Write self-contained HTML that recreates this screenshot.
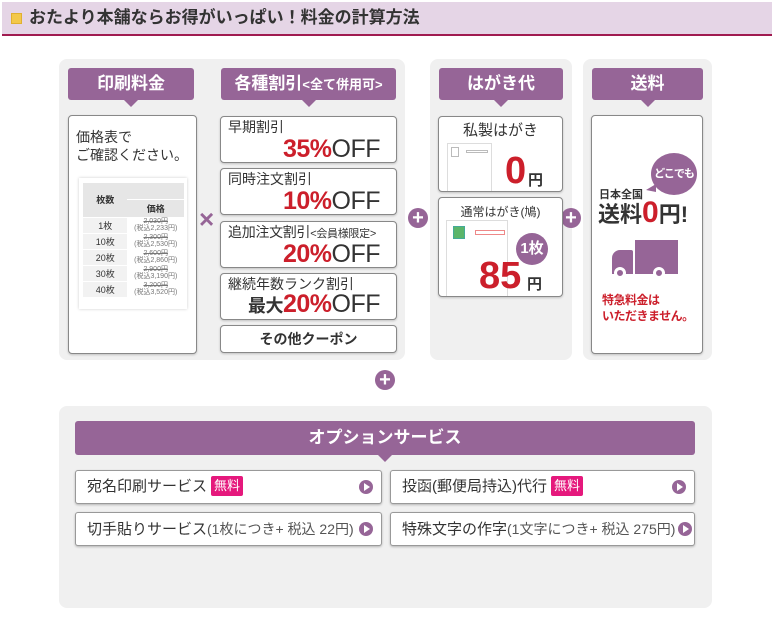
<!DOCTYPE html>
<html><head><meta charset="utf-8"><style>
*{box-sizing:border-box;margin:0;padding:0}
body{width:775px;height:623px;background:#fff;position:relative;overflow:hidden;font-family:"Liberation Sans","Noto Sans CJK JP",sans-serif;color:#333}
.a{position:absolute}
.panel{position:absolute;background:#f0f0f0;border-radius:8px}
.hd{position:absolute;background:#966597;color:#fff;font-weight:bold;border-radius:3px;text-align:center;font-size:17px;line-height:32px;height:32px;white-space:nowrap}
.hd:after{content:"";position:absolute;left:50%;bottom:-7px;margin-left:-7px;border-left:7px solid transparent;border-right:7px solid transparent;border-top:7px solid #966597}
.box{position:absolute;background:#fff;border:1px solid #888;border-radius:4px;box-shadow:0 1px 2px rgba(0,0,0,.2)}
.red{color:#cc1f2b;font-weight:bold}
.off{position:absolute;right:16px;bottom:-1px;font-size:25px;line-height:28px;font-weight:bold;color:#cc1f2b;letter-spacing:-.5px;white-space:nowrap}
.off span{color:#333;font-weight:normal}
.lbl{position:absolute;left:7px;top:1px;font-size:14px;line-height:18px;white-space:nowrap}
.plus{position:absolute;width:20px;height:20px;border-radius:50%;background:#966597;color:#fff;font-weight:bold;font-size:20px;line-height:20px;text-align:center}
.btn{position:absolute;background:#fff;border:1px solid #999;border-radius:3px;box-shadow:0 1px 2px rgba(0,0,0,.25);height:34px;font-size:15px;line-height:32px;padding-left:11px;white-space:nowrap}
.btn small{font-size:14px;color:#555}
.arr{position:absolute;right:8px;top:9px;width:14px;height:14px;border-radius:50%;background:#966597}
.arr:after{content:"";position:absolute;left:5px;top:3px;border-left:6px solid #fff;border-top:4px solid transparent;border-bottom:4px solid transparent}
.free{display:inline-block;background:#e5187c;color:#fff;font-size:13px;line-height:20px;padding:0 3px;border-radius:2px;margin-left:4px;vertical-align:1px}
table{border-collapse:collapse;font-size:9px;text-align:center}
td{border-bottom:1px solid #fff;height:16px}
</style></head><body>
<div class="a" style="left:2px;top:2px;width:770px;height:32px;background:#e5d5e6"></div>
<div class="a" style="left:2px;top:34px;width:770px;height:2px;background:#a01b50"></div>
<div class="a" style="left:11px;top:13px;width:11px;height:11px;background:#f3c84a;border:1px solid #e0b030"></div>
<div class="a" style="left:29px;top:6px;font-size:17px;font-weight:bold;color:#333;line-height:24px">おたより本舗ならお得がいっぱい！料金の計算方法</div>

<div class="panel" style="left:59px;top:59px;width:346px;height:301px"></div>
<div class="panel" style="left:430px;top:59px;width:142px;height:301px"></div>
<div class="panel" style="left:583px;top:59px;width:129px;height:301px"></div>

<div class="hd" style="left:68px;top:68px;width:126px">印刷料金</div>
<div class="hd" style="left:221px;top:68px;width:175px">各種割引<span style="font-size:13px">&lt;全て併用可&gt;</span></div>
<div class="hd" style="left:439px;top:68px;width:124px">はがき代</div>
<div class="hd" style="left:592px;top:68px;width:111px">送料</div>

<div class="box" style="left:68px;top:115px;width:129px;height:239px">
<div class="a" style="left:7px;top:12px;font-size:14px;line-height:18px">価格表で<br>ご確認ください。</div>
<div class="a" style="left:10px;top:62px;width:108px;height:131px;background:#fff;box-shadow:0 0 3px rgba(0,0,0,.2);padding:5px 3px 0 4px">
<table style="width:100%"><tr><td rowspan="2" style="background:#e6e6e6;width:44%;height:34px;font-weight:bold">枚数</td><td style="background:#e6e6e6;height:15px"></td></tr><tr><td style="background:#e6e6e6;font-weight:bold">価格</td></tr>
<tr><td style="background:#f2f2f2">1枚</td><td style="font-size:7px;line-height:7px;color:#777"><s>2,030円</s><br>(税込2,233円)</td></tr>
<tr><td style="background:#f2f2f2">10枚</td><td style="font-size:7px;line-height:7px;color:#777"><s>2,300円</s><br>(税込2,530円)</td></tr>
<tr><td style="background:#f2f2f2">20枚</td><td style="font-size:7px;line-height:7px;color:#777"><s>2,600円</s><br>(税込2,860円)</td></tr>
<tr><td style="background:#f2f2f2">30枚</td><td style="font-size:7px;line-height:7px;color:#777"><s>2,900円</s><br>(税込3,190円)</td></tr>
<tr><td style="background:#f2f2f2">40枚</td><td style="font-size:7px;line-height:7px;color:#777"><s>3,200円</s><br>(税込3,520円)</td></tr></table>
</div></div>

<div class="a" style="left:199px;top:204px;font-size:26px;font-weight:bold;color:#966597">×</div>

<div class="box" style="left:220px;top:116px;width:177px;height:47px"><div class="lbl">早期割引</div><div class="off">35%<span>OFF</span></div></div>
<div class="box" style="left:220px;top:168px;width:177px;height:47px"><div class="lbl">同時注文割引</div><div class="off">10%<span>OFF</span></div></div>
<div class="box" style="left:220px;top:221px;width:177px;height:47px"><div class="lbl" style="letter-spacing:-.3px">追加注文割引<span style="font-size:11px">&lt;会員様限定&gt;</span></div><div class="off">20%<span>OFF</span></div></div>
<div class="box" style="left:220px;top:273px;width:177px;height:47px"><div class="lbl">継続年数ランク割引</div><div class="off"><span style="font-size:18px;font-weight:bold">最大</span>20%<span>OFF</span></div></div>
<div class="box" style="left:220px;top:325px;width:177px;height:28px;text-align:center;font-size:14px;font-weight:bold;line-height:26px">その他クーポン</div>

<div class="plus" style="left:408px;top:208px">+</div>
<div class="plus" style="left:561px;top:208px">+</div>
<div class="plus" style="left:375px;top:370px">+</div>

<div class="box" style="left:438px;top:116px;width:125px;height:76px;overflow:hidden">
<div class="a" style="left:0;top:2px;width:100%;text-align:center;font-size:15px">私製はがき</div>
<div class="a" style="left:8px;top:26px;width:45px;height:60px;border:1px solid #ddd"><div class="a" style="left:3px;top:3px;width:8px;height:10px;border:1px solid #bbb"></div><div class="a" style="left:18px;top:6px;width:22px;height:3px;border:1px solid #bbb"></div></div>
<div class="a red" style="left:66px;top:33px;font-size:38px;line-height:42px">0</div>
<div class="a" style="left:89px;top:52px;font-size:15px;font-weight:bold">円</div>
</div>
<div class="box" style="left:438px;top:197px;width:125px;height:100px;overflow:hidden">
<div class="a" style="left:0;top:5px;width:100%;text-align:center;font-size:12px">通常はがき(鳩)</div>
<div class="a" style="left:7px;top:22px;width:62px;height:80px;border:1px solid #ddd"><div class="a" style="left:6px;top:5px;width:12px;height:13px;background:#5bb56a;border:1px solid #4a9"></div><div class="a" style="left:28px;top:9px;width:30px;height:5px;border:1px solid #e88"></div></div>
<div class="a" style="left:77px;top:35px;width:32px;height:32px;border-radius:50%;background:#966597;color:#fff;font-weight:bold;font-size:15px;line-height:32px;text-align:center">1枚</div>
<div class="a red" style="left:40px;top:57px;font-size:38px;line-height:42px">85</div>
<div class="a" style="left:88px;top:75px;font-size:15px;font-weight:bold">円</div>
</div>

<div class="box" style="left:591px;top:115px;width:112px;height:239px">
<div class="a" style="left:59px;top:37px;width:46px;height:42px;border-radius:50%;background:#966597;color:#fff;font-size:11px;font-weight:bold;line-height:42px;text-align:center;letter-spacing:-1px;white-space:nowrap">どこでも</div>
<div class="a" style="left:54px;top:68px;border-right:10px solid #966597;border-top:6px solid transparent;border-bottom:2px solid transparent"></div>
<div class="a" style="left:7px;top:70px;font-size:11px;font-weight:bold">日本全国</div>
<div class="a" style="left:6px;top:80px;font-size:22px;line-height:34px;font-weight:bold;white-space:nowrap">送料<span class="red" style="font-size:30px">0</span>円!</div>
<div class="a" style="left:43px;top:124px;width:43px;height:34px;background:#966597"></div>
<div class="a" style="left:20px;top:134px;width:21px;height:24px;background:#966597;border-radius:8px 2px 0 0"></div>
<div class="a" style="left:22px;top:151px;width:12px;height:12px;border-radius:50%;background:#966597;border:3px solid #fff"></div>
<div class="a" style="left:61px;top:151px;width:12px;height:12px;border-radius:50%;background:#966597;border:3px solid #fff"></div>
<div class="a red" style="left:10px;top:176px;font-size:12px;line-height:16px;white-space:nowrap;letter-spacing:-.5px">特急料金は<br>いただきません。</div>
</div>

<div class="panel" style="left:59px;top:406px;width:653px;height:202px"></div>
<div class="hd" style="left:75px;top:421px;width:620px;height:34px;line-height:34px">オプションサービス</div>
<div class="btn" style="left:75px;top:470px;width:307px">宛名印刷サービス<span class="free">無料</span><div class="arr"></div></div>
<div class="btn" style="left:390px;top:470px;width:305px">投函(郵便局持込)代行<span class="free">無料</span><div class="arr"></div></div>
<div class="btn" style="left:75px;top:512px;width:307px">切手貼りサービス<small>(1枚につき+ 税込 22円)</small><div class="arr"></div></div>
<div class="btn" style="left:390px;top:512px;width:305px">特殊文字の作字<small>(1文字につき+ 税込 275円)</small><div class="arr" style="right:2px"></div></div>
</body></html>
